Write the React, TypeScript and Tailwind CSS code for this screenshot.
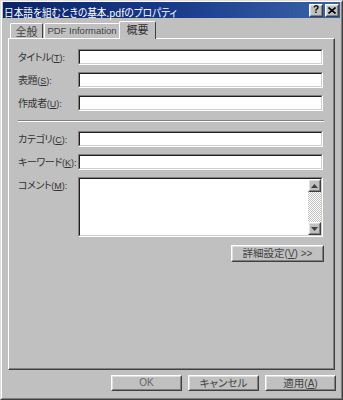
import type { ReactNode } from "react";

const font = "font-['MS_UI_Gothic','Noto_Sans_CJK_JP',sans-serif] [font-feature-settings:'palt']";

function Label({ text, u, className }: { text: string; u: string; className?: string }) {
  return (
    <div className={`w-[60px] shrink-0 text-[10px] leading-none text-[#333] whitespace-nowrap tracking-[-0.4px] ${className ?? ""}`}>
      {text}
      <span className="font-['Liberation_Sans',sans-serif] text-[9px] tracking-normal">
        (<span className="underline">{u}</span>):
      </span>
    </div>
  );
}

function Field({ label, u }: { label: string; u: string }) {
  return (
    <div className="flex items-center h-4">
      <Label text={label} u={u} />
      <Sunken className="w-[245px] h-4" />
    </div>
  );
}

function Sunken({ className, children }: { className: string; children?: ReactNode }) {
  return (
    <div className={`${className} shrink-0 border border-t-[#808080] border-l-[#808080] border-b-white border-r-white`}>
      <div className="w-full h-full border border-t-[#202020] border-l-[#202020] border-b-[#d4d0c8] border-r-[#d4d0c8] bg-white flex justify-end">
        {children}
      </div>
    </div>
  );
}

function Raised({ className, children }: { className: string; children?: ReactNode }) {
  return (
    <div className={`${className} shrink-0 border border-t-white border-l-white border-b-[#404040] border-r-[#404040] bg-[#c0c0c0]`}>
      <div className="w-full h-full border border-t-[#dfdfdf] border-l-[#dfdfdf] border-b-[#808080] border-r-[#808080] flex items-center justify-center">
        {children}
      </div>
    </div>
  );
}

function Arrow({ up }: { up?: boolean }) {
  return (
    <Raised className="w-[13px] h-[13px]">
      <svg width="7" height="4" viewBox="0 0 7 4">
        <path d={up ? "M3.5 0L7 4H0z" : "M0 0h7L3.5 4z"} fill="#404040" />
      </svg>
    </Raised>
  );
}

export default function App() {
  return (
    <div className={`${font} w-[343px] h-[400px] bg-[#c0c0c0] border border-t-[#dfdfdf] border-l-[#dfdfdf] border-b-[#404040] border-r-[#404040] overflow-hidden`}>
      <div className="w-full h-full border border-t-white border-l-white border-b-[#808080] border-r-[#808080] px-[1px]">
        {/* title bar */}
        <div className="h-[16px] bg-gradient-to-r from-[#0a246a] via-[#183a8a] to-[#3b64a8] flex items-center pl-[1px] pr-[1px]">
          <div className="flex-1 overflow-hidden">
            <span className="inline-block origin-left scale-x-[0.88] text-white text-[11px] leading-none whitespace-nowrap">
              日本語を組むときの基本.pdfのプロパティ
            </span>
          </div>
          <Raised className="w-[14px] h-[13px]">
            <span className="text-[10px] leading-none font-bold text-black font-['Liberation_Sans',sans-serif]">?</span>
          </Raised>
          <Raised className="w-[14px] h-[13px] ml-[2px]">
            <svg width="8" height="7" viewBox="0 0 8 7">
              <path d="M0.5 0.5l7 6M7.5 0.5l-7 6" stroke="#000" strokeWidth="1.6" />
            </svg>
          </Raised>
        </div>

        {/* tabs */}
        <div className="flex items-end h-[19px] mt-[1px] pl-[7px]">
          <div className="h-[15px] w-[33px] border-t border-l border-white border-r border-r-[#404040] rounded-t-[2px] flex items-center justify-center text-[11px] leading-none text-[#444]">
            全般
          </div>
          <div className="h-[15px] w-[76px] ml-[1px] whitespace-nowrap border-t border-l border-white border-r border-r-[#404040] rounded-t-[2px] flex items-center justify-center text-[9.5px] leading-none text-[#444] font-['Liberation_Sans',sans-serif]">
            PDF Information
          </div>
          <div className="relative top-[1px] -ml-[1px] h-[18px] w-[37px] bg-[#c0c0c0] border-t border-l border-white border-r border-r-[#404040] rounded-t-[2px] flex items-start pt-[2px] justify-center text-[11px] leading-none text-[#333] z-10">
            概要
          </div>
        </div>

        {/* panel */}
        <div className="ml-[5px] w-[327px] h-[332px] border border-t-white border-l-white border-b-[#404040] border-r-[#404040]">
          <div className="w-full h-full border-r border-b border-[#808080] pt-[10px] pl-[9px]">
            <div className="flex flex-col gap-[7px]">
              <Field label="タイトル" u="T" />
              <Field label="表題" u="S" />
              <Field label="作成者" u="U" />
            </div>
            <div className="mt-[9px] mb-[9px] w-[306px] border-t border-t-[#808080] border-b border-b-white" />
            <div className="flex flex-col gap-[7px]">
              <Field label="カテゴリ" u="C" />
              <Field label="キーワード" u="K" />
              <div className="flex items-start">
                <Label text="コメント" u="M" className="pt-[3px]" />
                <Sunken className="w-[245px] h-[60px]">
                  <div className="w-[13px] h-full flex flex-col bg-[repeating-conic-gradient(#c0c0c0_0_25%,#ffffff_0_50%)] bg-[length:2px_2px]">
                    <Arrow up />
                    <div className="flex-1" />
                    <Arrow />
                  </div>
                </Sunken>
              </div>
            </div>
            <div className="flex justify-end w-[306px] mt-[8px]">
              <Raised className="w-[93px] h-[17px]">
                <span className="text-[10.5px] leading-none text-[#444]">
                  詳細設定
                  <span className="font-['Liberation_Sans',sans-serif] text-[10px]">
                    (<span className="underline">V</span>) &gt;&gt;
                  </span>
                </span>
              </Raised>
            </div>
          </div>
        </div>

        {/* bottom buttons */}
        <div className="flex justify-end gap-[6px] mt-[5px] pr-[4px]">
          <Raised className="w-[71px] h-[16px]">
            <span className="text-[10px] leading-none text-[#666] font-['Liberation_Sans',sans-serif]">OK</span>
          </Raised>
          <Raised className="w-[71px] h-[16px]">
            <span className="text-[10.5px] leading-none text-[#444]">キャンセル</span>
          </Raised>
          <Raised className="w-[71px] h-[16px]">
            <span className="text-[10.5px] leading-none text-[#444]">
              適用
              <span className="font-['Liberation_Sans',sans-serif] text-[10px]">
                (<span className="underline">A</span>)
              </span>
            </span>
          </Raised>
        </div>
      </div>
    </div>
  );
}
